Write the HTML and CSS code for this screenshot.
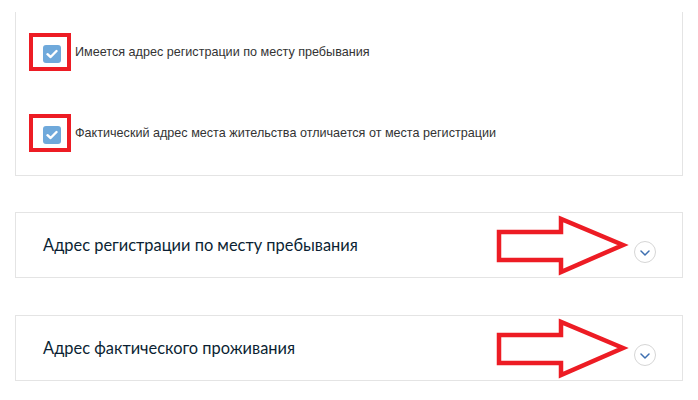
FILE: index.html
```html
<!DOCTYPE html>
<html lang="ru">
<head>
    <meta charset="UTF-8">
    <meta name="viewport" content="width=device-width, initial-scale=1.0">
    <title>Адреса</title>
    <link rel="stylesheet" href="styles.css">
</head>
<body>

    <div class="page">
        <!-- Checkboxes -->
        <div class="card options">
            <label class="option">
                <span class="mark">
                    <span class="checkbox">
                        <svg width="12" height="10" viewBox="0 0 12 10"><path d="M1.5 5.2 L4.6 8 L10.5 2" fill="none" stroke="#fff" stroke-width="2.4" stroke-linecap="round" stroke-linejoin="round"/></svg>
                    </span>
                </span>
                <span class="option-text">Имеется адрес регистрации по месту пребывания</span>
            </label>
            <label class="option">
                <span class="mark">
                    <span class="checkbox">
                        <svg width="12" height="10" viewBox="0 0 12 10"><path d="M1.5 5.2 L4.6 8 L10.5 2" fill="none" stroke="#fff" stroke-width="2.4" stroke-linecap="round" stroke-linejoin="round"/></svg>
                    </span>
                </span>
                <span class="option-text">Фактический адрес места жительства отличается от места регистрации</span>
            </label>
        </div>

        <!-- Collapsed sections -->
        <div class="card section">
            <span class="section-title">Адрес регистрации по месту пребывания</span>
            <span class="toggle">
                <svg width="10" height="6" viewBox="0 0 10 6"><path d="M1 1 L5 5 L9 1" fill="none" stroke="#3d6fb0" stroke-width="1.5" stroke-linecap="round" stroke-linejoin="round"/></svg>
            </span>
            <svg class="arrow" width="135" height="62" viewBox="0 0 135 62"><polygon points="4,17 66,17 66,4 128,30 66,57 66,45 4,45" fill="none" stroke="#ed1c24" stroke-width="4.5"/></svg>
        </div>

        <div class="card section">
            <span class="section-title">Адрес фактического проживания</span>
            <span class="toggle">
                <svg width="10" height="6" viewBox="0 0 10 6"><path d="M1 1 L5 5 L9 1" fill="none" stroke="#3d6fb0" stroke-width="1.5" stroke-linecap="round" stroke-linejoin="round"/></svg>
            </span>
            <svg class="arrow" width="135" height="62" viewBox="0 0 135 62"><polygon points="4,17 66,17 66,4 128,30 66,57 66,45 4,45" fill="none" stroke="#ed1c24" stroke-width="4.5"/></svg>
        </div>
    </div>

</body>
</html>
```

FILE: styles.css
```css
body {
    margin: 0;
    padding: 0;
    background: #fff;
    font-family: "Liberation Sans", Arial, sans-serif;
}
.page {
    width: 668px;
    margin-left: 15px;
    padding-top: 12px;
    display: flex;
    flex-direction: column;
    gap: 36px;
}
.card {
    border: 1px solid #e4e4e4;
    background: #fff;
}
.options {
    border-top: none;
    padding: 21px 0 23px 13px;
    display: flex;
    flex-direction: column;
    gap: 43px;
}
.option {
    display: flex;
    align-items: center;
    gap: 4px;
    font-size: 12.6px;
    color: #333;
}
.mark {
    display: flex;
    border: 4px solid #ed1c24;
    padding: 8px 6px 4px 10px;
}
.checkbox {
    width: 18px;
    height: 18px;
    border-radius: 3px;
    background: #6fa9db;
    display: flex;
    align-items: center;
    justify-content: center;
}
.section {
    position: relative;
    height: 64px;
    padding: 0 26px 0 27px;
    display: flex;
    align-items: center;
    justify-content: space-between;
}
.section + .section {
    margin-top: 1px;
}
.section-title {
    font-family: Lato, "Noto Sans", sans-serif;
    font-size: 16.4px;
    color: #0b1f33;
    margin-top: -2px;
}
.toggle {
    width: 20px;
    height: 20px;
    border: 1px solid #d6d6d6;
    border-radius: 50%;
    display: flex;
    align-items: center;
    justify-content: center;
    margin-top: 14px;
}
.toggle svg {
    margin-top: 1px;
}
.arrow {
    position: absolute;
    left: 479px;
    top: 2px;
}
```
